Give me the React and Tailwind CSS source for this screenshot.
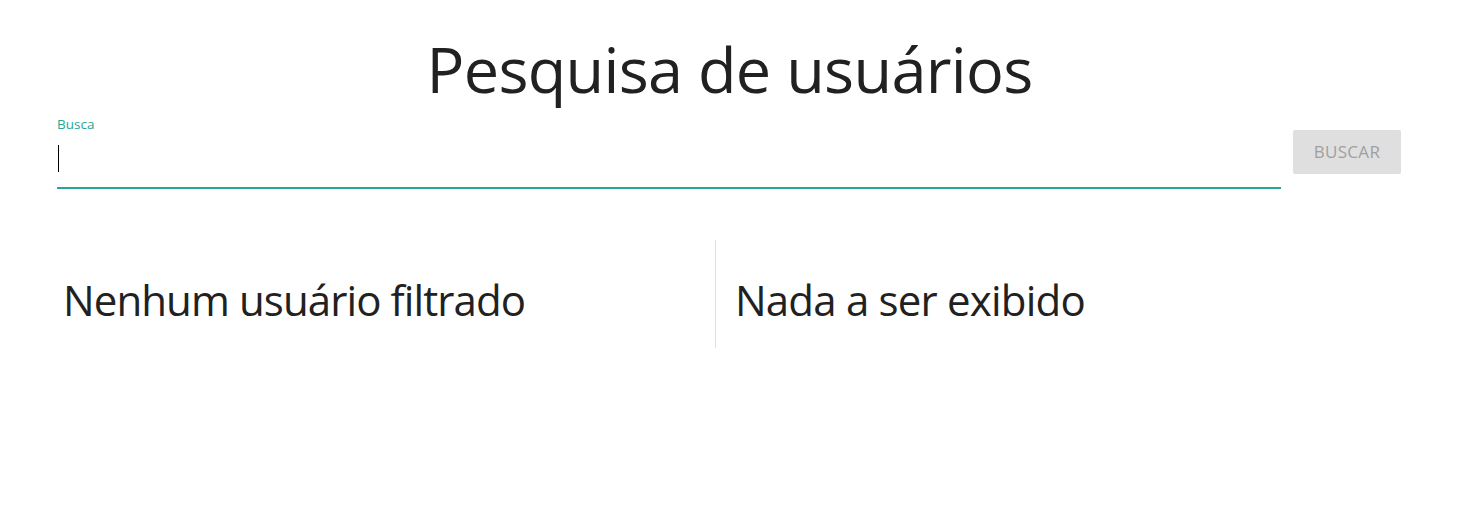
export default function App() {
  return (
    <div className="w-[1474px] h-[518px] bg-white text-[#212121]" style={{ fontFamily: '"Open Sans", "Noto Sans", sans-serif' }}>
      <h1 className="text-center text-[63px] leading-[70px] pt-[34px] pr-[15px] font-normal tracking-[-0.7px]">Pesquisa de usuários</h1>
      <div className="flex items-start pl-[57px] pr-[73px] mt-[12px]">
        <div className="flex-1 flex flex-col">
          <label className="text-[13.5px] leading-[16px] text-[#26a69a]">Busca</label>
          <div className="h-[57px] border-b-2 border-[#26a69a] flex items-start">
            <span className="w-px h-[27px] bg-black ml-px mt-[13px]"></span>
          </div>
        </div>
        <button className="ml-[12px] mt-[14px] w-[108px] h-[44px] rounded-[2px] bg-[#dfdfdf] text-[#9f9f9f] text-[17px] tracking-[0.3px] uppercase">Buscar</button>
      </div>
      <div className="flex mt-[51px] pl-[57px] pr-[73px]">
        <div className="w-[659px] pl-[6px] pt-[36px] h-[108px] border-r border-[#e0e0e0]">
          <h3 className="text-[42px] leading-[48px] tracking-[-0.9px]">Nenhum usuário filtrado</h3>
        </div>
        <div className="flex-1 pl-[19px] pt-[36px]">
          <h3 className="text-[42px] leading-[48px] tracking-[-0.8px]">Nada a ser exibido</h3>
        </div>
      </div>
    </div>
  );
}
